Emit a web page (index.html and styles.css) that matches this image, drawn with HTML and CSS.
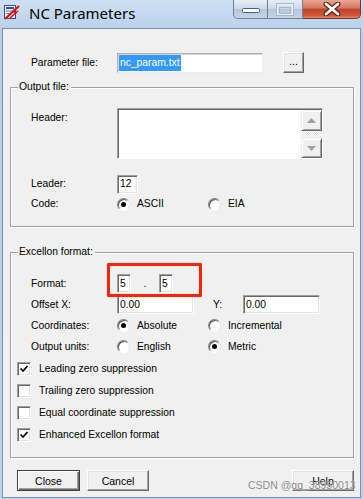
FILE: index.html
```html
<!DOCTYPE html>
<html>
	<head>
		<meta charset="utf-8">
		<title>NC Parameters</title>
		<link rel="stylesheet" href="styles.css">
	</head>
	<body>
		<div class="window">
			<div class="titlebar">
				<svg class="app-icon" width="16" height="16" viewBox="0 0 16 16">
					<rect x="0.5" y="1.5" width="11" height="13" fill="#e8eefa" stroke="#3a4f9a"/>
					<rect x="2" y="3" width="8" height="2" fill="#3a4f9a"/>
					<rect x="2" y="6.5" width="6" height="1" fill="#6f7fbd"/>
					<rect x="2" y="9" width="5" height="1" fill="#6f7fbd"/>
					<path d="M1 15 L15 2" stroke="#e01010" stroke-width="2.2"/>
					<path d="M6 14 L14 7 M9 6 L12 10" stroke="#e01010" stroke-width="1.6"/>
				</svg>
				<span class="title">NC Parameters</span>
				<div class="caption">
					<span class="cap cap-min">
						<svg width="18" height="5" viewBox="0 0 18 5"><rect x="0.5" y="0.5" width="17" height="4" rx="1" fill="#fff" stroke="#4f5e72"/></svg>
					</span>
					<span class="cap cap-max">
						<svg width="18" height="13" viewBox="0 0 18 13"><rect x="1.5" y="1.5" width="15" height="10" fill="none" stroke="#e6eef8" stroke-width="2"/><rect x="0.5" y="0.5" width="17" height="12" fill="none" stroke="#a9b8cb"/><rect x="3.5" y="4.5" width="11" height="6" fill="none" stroke="#a9b8cb"/></svg>
					</span>
					<span class="cap cap-close">
						<svg width="18" height="14" viewBox="0 0 18 14"><path d="M3 2 L15 12 M15 2 L3 12" stroke="#5a2018" stroke-width="5" stroke-linecap="round"/><path d="M3 2 L15 12 M15 2 L3 12" stroke="#fff" stroke-width="2.8" stroke-linecap="round"/></svg>
					</span>
				</div>
			</div>

			<div class="client">
				<div class="row row-param">
					<span class="label">Parameter file:</span>
					<span class="field field-param"><span class="sel">nc_param.txt</span></span>
					<span class="btn btn-dots">...</span>
				</div>

				<div class="group group-output">
					<span class="legend">Output file:</span>
					<div class="row row-header">
						<span class="label label-top">Header:</span>
						<div class="memo">
							<div class="memo-text"></div>
							<div class="scroll">
								<span class="sbtn sbtn-up"><svg width="9" height="5" viewBox="0 0 9 5"><path d="M0 5 L4.5 0 L9 5 Z" fill="#a0a0a0"/></svg></span>
								<span class="track"></span>
								<span class="sbtn sbtn-down"><svg width="9" height="5" viewBox="0 0 9 5"><path d="M0 0 L4.5 5 L9 0 Z" fill="#a0a0a0"/></svg></span>
							</div>
						</div>
					</div>
					<div class="row row-line row-leader">
						<span class="label">Leader:</span>
						<span class="field field-leader">12</span>
					</div>
					<div class="row row-line">
						<span class="label">Code:</span>
						<span class="opt"><span class="radio on"></span>ASCII</span>
						<span class="opt"><span class="radio"></span>EIA</span>
					</div>
				</div>

				<div class="group group-excellon">
					<span class="legend">Excellon format:</span>
					<div class="mark"></div>
					<div class="row row-fmt row-first">
						<span class="label">Format:</span>
						<span class="field field-digit">5</span>
						<span class="dot">.</span>
						<span class="field field-digit">5</span>
					</div>
					<div class="row row-fmt">
						<span class="label">Offset X:</span>
						<span class="field field-offset">0.00</span>
						<span class="ylabel">Y:</span>
						<span class="field field-offset">0.00</span>
					</div>
					<div class="row row-fmt">
						<span class="label">Coordinates:</span>
						<span class="opt"><span class="radio on"></span>Absolute</span>
						<span class="opt"><span class="radio"></span>Incremental</span>
					</div>
					<div class="row row-fmt">
						<span class="label">Output units:</span>
						<span class="opt"><span class="radio"></span>English</span>
						<span class="opt"><span class="radio on"></span>Metric</span>
					</div>
					<div class="checks">
						<div class="check"><span class="box on"><svg width="10" height="10" viewBox="0 0 10 10"><path d="M1.5 4.5 L4 7 L8.5 2" fill="none" stroke="#000" stroke-width="1.7"/></svg></span>Leading zero suppression</div>
						<div class="check"><span class="box"></span>Trailing zero suppression</div>
						<div class="check"><span class="box"></span>Equal coordinate suppression</div>
						<div class="check"><span class="box on"><svg width="10" height="10" viewBox="0 0 10 10"><path d="M1.5 4.5 L4 7 L8.5 2" fill="none" stroke="#000" stroke-width="1.7"/></svg></span>Enhanced Excellon format</div>
					</div>
				</div>

				<div class="buttons">
					<span class="btn btn-default">Close</span>
					<span class="btn btn-cancel">Cancel</span>
					<span class="btn btn-help">Help</span>
				</div>

				<span class="watermark">CSDN @qq_38950013</span>
			</div>
		</div>
	</body>
</html>
```

FILE: styles.css
```css
*{
	margin: 0;
	padding: 0;
	box-sizing: border-box;
}
body{
	width: 363px;
	height: 499px;
	overflow: hidden;
	background: #bfd4ee;
	font-family: "Liberation Sans", Arial, sans-serif;
	font-size: 10.3px;
	color: #000;
}
.window{
	height: 499px;
	display: flex;
	flex-direction: column;
	padding: 0 2px 1px 2px;
	background: linear-gradient(#cfe0f4, #b9d0ea 30px, #bcd2ec);
}
/* title bar */
.titlebar{
	height: 28px;
	display: flex;
	align-items: flex-start;
	margin: 0 -2px;
}
.app-icon{
	margin: 4px 0 0 4px;
}
.title{
	margin: 3px 0 0 9px;
	font-family: "Noto Sans", "Open Sans", sans-serif;
	font-size: 15px;
	line-height: 20px;
	color: #000;
}
.caption{
	margin-left: auto;
	margin-right: 2px;
	display: flex;
	height: 19px;
}
.cap{
	height: 19px;
	display: flex;
	align-items: center;
	justify-content: center;
	border: 1px solid #6f7f96;
	border-top: 0;
}
.cap-min{
	width: 35px;
	border-radius: 0 0 0 5px;
	background: linear-gradient(#e6eef8, #cbd8e8 50%, #b3c5dc 51%, #c4d5ea);
	padding-top: 3px;
}
.cap-max{
	width: 35px;
	border-left: 0;
	background: linear-gradient(#e6eef8, #cbd8e8 50%, #b3c5dc 51%, #c4d5ea);
}
.cap-close{
	width: 58px;
	border-left: 0;
	border-color: #7a3324;
	border-radius: 0 0 5px 0;
	background: linear-gradient(#e9a797, #d47660 45%, #c1432a 52%, #d0563a 85%, #e08a6e);
}
/* client */
.client{
	position: relative;
	flex: 1;
	background: #f0f0f0;
	border: 1px solid #7f8ea3;
}
.row{
	display: flex;
	align-items: center;
}
.label{
	width: 86px;
	flex-shrink: 0;
	line-height: 12px;
}
.row-param{
	height: 21px;
	margin-top: 23px;
	padding-left: 28px;
}
.field{
	display: flex;
	align-items: center;
	background: #fff;
	border: 1px solid;
	border-color: #a0a0a0 #fff #fff #a0a0a0;
	box-shadow: inset 1px 1px #696969, inset -1px -1px #e3e3e3;
	padding-left: 2px;
	line-height: 12px;
}
.field-param{
	width: 146px;
	height: 20px;
	border-color: #b0b0b0 #ececec #ececec #b0b0b0;
	box-shadow: inset 1px 1px #d6d6d6;
	padding-left: 1px;
}
.sel{
	background: #3399ff;
	color: #fff;
	line-height: 16px;
	padding: 0 1px;
}
.btn{
	display: flex;
	align-items: center;
	justify-content: center;
	height: 21px;
	background: #f0f0f0;
	border: 1px solid;
	border-color: #fff #696969 #696969 #fff;
	box-shadow: inset -1px -1px #a0a0a0, inset 1px 1px #e3e3e3;
	font-size: 11px;
}
.btn-dots{
	width: 21px;
	margin-left: 20px;
	padding-bottom: 3px;
}
/* groups */
.group{
	position: relative;
	margin: 0 6px 0 7px;
	border: 1px solid #a0a0a0;
	box-shadow: inset 1px 1px #fff, 1px 1px #fff;
	padding-left: 20px;
}
.legend{
	display: block;
	width: fit-content;
	margin: -7px 0 0 -13px;
	padding: 0 2px 0 1px;
	background: #f0f0f0;
	line-height: 12px;
}
.group-output{
	margin-top: 14px;
	padding-bottom: 12px;
}
.row-header{
	align-items: flex-start;
	margin-top: 15px;
}
.label-top{
	padding-top: 4px;
}
.memo{
	width: 206px;
	height: 51px;
	display: flex;
	background: #fff;
	border: 1px solid;
	border-color: #a0a0a0 #fff #fff #a0a0a0;
	box-shadow: inset 1px 1px #696969;
	padding: 1px 0 0 1px;
}
.memo-text{
	flex: 1;
}
.scroll{
	width: 21px;
	display: flex;
	flex-direction: column;
}
.sbtn{
	height: 21px;
	display: flex;
	align-items: center;
	justify-content: center;
	background: #f0f0f0;
	border: 1px solid;
	border-color: #f0f0f0 #696969 #696969 #f0f0f0;
	box-shadow: inset 1px 1px #fff, inset -1px -1px #a0a0a0;
}
.sbtn-down{
	height: 20px;
}
.track{
	flex: 1;
	background: repeating-conic-gradient(#fff 0 25%, #e2e2e2 0 50%) 0 0 / 2px 2px;
}
.row-line{
	height: 20px;
}
.row-leader{
	margin-top: 15px;
}
.field-leader{
	width: 21px;
	height: 19px;
}
.opt{
	width: 91px;
	display: flex;
	align-items: center;
	gap: 7px;
	line-height: 12px;
}
.radio{
	width: 13px;
	height: 13px;
	border-radius: 50%;
	background: #fff;
	border: 1px solid;
	border-color: #808080 #e3e3e3 #fff #808080;
	box-shadow: inset 1px 1px #555;
	display: flex;
	align-items: center;
	justify-content: center;
}
.radio.on::after{
	content: "";
	width: 5px;
	height: 5px;
	border-radius: 50%;
	background: #000;
}
.group-excellon{
	margin-top: 25px;
	padding-bottom: 11px;
}
.mark{
	position: absolute;
	left: 96px;
	top: 10px;
	width: 95px;
	height: 34px;
	border: 3px solid #ff2400;
	border-radius: 1px;
}
.row-fmt{
	height: 21px;
}
.row-first{
	margin-top: 15px;
}
.field-digit{
	width: 14px;
	height: 19px;
	padding-left: 2px;
}
.dot{
	width: 28px;
	text-align: center;
	line-height: 12px;
}
.field-offset{
	width: 77px;
	height: 19px;
}
.ylabel{
	width: 49px;
	padding-left: 19px;
	line-height: 12px;
}
.checks{
	margin: 1px 0 0 -14px;
}
.check{
	height: 22px;
	display: flex;
	align-items: center;
	gap: 8px;
	line-height: 12px;
}
.box{
	width: 14px;
	height: 14px;
	display: flex;
	align-items: center;
	justify-content: center;
	background: #fff;
	border: 1px solid;
	border-color: #a0a0a0 #fff #fff #a0a0a0;
	box-shadow: inset 1px 1px #696969, inset -1px -1px #e3e3e3;
}
/* bottom buttons */
.buttons{
	display: flex;
	margin-top: 12px;
	padding: 0 6px 0 14px;
}
.buttons .btn{
	width: 62px;
	height: 21px;
	font-size: 10.5px;
}
.btn-default{
	border-color: #404040;
	box-shadow: inset 1px 1px #fff, inset -1px -1px #696969, inset -2px -2px #a0a0a0;
}
.buttons .btn-default{
	width: 63px;
}
.btn-cancel{
	margin-left: 7px;
}
.btn-help{
	margin-left: auto;
}
.watermark{
	position: absolute;
	left: 245px;
	top: 450px;
	line-height: 12px;
	font-size: 10.5px;
	color: rgba(105, 105, 105, 0.8);
	text-shadow: 0 0 1px #fff;
}
```
